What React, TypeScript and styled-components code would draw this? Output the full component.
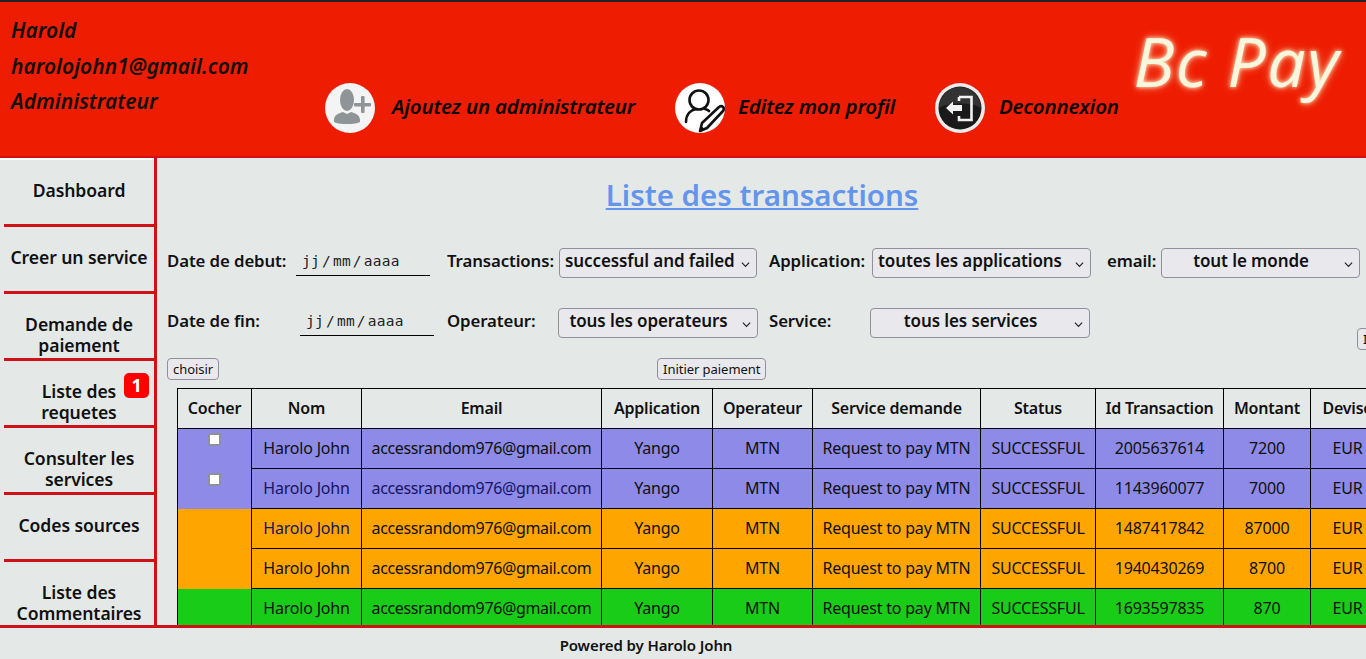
import React from "react"
import styled, { createGlobalStyle } from "styled-components"

const GlobalStyle = createGlobalStyle`
  html, body {
    margin: 0;
    height: 100%;
    overflow: hidden;
  }
  body {
    font-family: "Noto Sans", "Open Sans", sans-serif;
    color: #111;
    background: #e4e9e8;
  }
`

const RED = "#d01218"

const Page = styled.div`
  height: 659px;
  display: grid;
  grid-template-rows: 158px 1fr 34px;
  overflow: hidden;
`

const Header = styled.header`
  display: flex;
  background: #ee1c00;
  border-top: 2px solid #222;
  border-bottom: 2px solid ${RED};
  position: relative;
`

const UserInfo = styled.div`
  width: 325px;
  flex: none;
  padding: 14px 0 0 11px;
  box-sizing: border-box;
  display: flex;
  flex-direction: column;
  gap: 7px;
`

const UserLine = styled.div`
  font-size: 21px;
  line-height: 28.5px;
  font-weight: 600;
  font-style: italic;
  color: #141010;
`

const Actions = styled.nav`
  display: flex;
  align-items: flex-start;
  padding-top: 81px;
`

const Action = styled.a<{ $w: number; $gap: number }>`
  display: flex;
  align-items: center;
  width: ${(p) => p.$w}px;
  gap: ${(p) => p.$gap}px;
  font-size: 20.5px;
  font-weight: 600;
  font-style: italic;
  color: #0c0505;
  letter-spacing: -0.2px;
  white-space: nowrap;
`

const ActionText = styled.span`
  padding-bottom: 4px;
`

const Round = styled.svg`
  width: 50px;
  height: 50px;
  flex: none;
`

const Brand = styled.div`
  position: absolute;
  top: 19px;
  right: 26px;
  font-family: "Open Sans", sans-serif;
  font-style: italic;
  font-size: 68px;
  line-height: 80px;
  color: #f8f6dc;
  letter-spacing: 1.5px;
  text-shadow: 0 0 4px #fff6c8, 0 0 10px rgba(255, 232, 190, 0.6);
`

const Middle = styled.div`
  display: grid;
  grid-template-columns: 157px 1fr;
  min-height: 0;
  overflow: hidden;
`

const Sidebar = styled.aside`
  border-right: 3px solid ${RED};
  overflow: hidden;
`

const NavList = styled.div`
  border-top: 2px solid #fff;
  display: flex;
  flex-direction: column;
`

const NavItem = styled.div`
  position: relative;
  height: 67px;
  flex: none;
  box-sizing: border-box;
  margin-left: 4px;
  padding-top: 20px;
  border-bottom: 3px solid ${RED};
  text-align: center;
  font-size: 17.6px;
  line-height: 21px;
  font-weight: 600;
  letter-spacing: -0.1px;
  color: #111;
`

const NavLast = styled(NavItem)`
  border-bottom: none;
`

const Badge = styled.span`
  position: absolute;
  top: 12px;
  right: 5px;
  width: 25px;
  height: 25px;
  border-radius: 5px;
  background: #f00;
  color: #fff;
  font-size: 18px;
  line-height: 24px;
  font-weight: 700;
  text-align: center;
`

const Main = styled.main`
  min-width: 0;
  overflow: hidden;
  padding: 0 0 0 10px;
  display: flex;
  flex-direction: column;
`

const Title = styled.h1`
  flex: none;
  margin: 17px 0 0 0;
  height: 59px;
  width: 1190px;
  text-align: center;
  font-size: 29.5px;
  line-height: 40px;
  font-weight: 600;
  color: #6495ed;
  text-decoration: underline;
`

const FilterRow = styled.div`
  display: flex;
  flex: none;
  align-items: center;
  height: 30px;
  white-space: nowrap;
`

const FirstRow = styled(FilterRow)`
  margin-top: 14px;
`

const SecondRow = styled(FilterRow)`
  margin-top: 30px;
`

const Label = styled.label<{ $w: number }>`
  width: ${(p) => p.$w}px;
  flex: none;
  font-size: 16.8px;
  font-weight: 600;
  letter-spacing: -0.1px;
  padding-bottom: 6px;
  color: #111;
`

const DateBox = styled.div<{ $mr: number }>`
  width: 134px;
  margin-right: ${(p) => p.$mr}px;
  align-self: flex-start;
  flex: none;
  box-sizing: border-box;
  height: 28px;
  border-bottom: 1px solid #000;
  padding: 3px 0 0 6px;
  font-family: "DejaVu Sans Mono", monospace;
  font-size: 14.5px;
  line-height: 20px;
  letter-spacing: 0.25px;
  word-spacing: -7px;
  color: #222;
`

const Select = styled.div<{ $w: number; $mr: number; $center?: boolean }>`
  width: ${(p) => p.$w}px;
  margin-right: ${(p) => p.$mr}px;
  flex: none;
  box-sizing: border-box;
  height: 30px;
  border: 1px solid #8f8f9d;
  border-radius: 4px;
  background: #e9e9ed;
  position: relative;
  padding: 0 24px 0 5px;
  text-align: ${(p) => (p.$center ? "center" : "left")};
  font-size: 17px;
  line-height: 24px;
  font-weight: 600;
  letter-spacing: -0.1px;
  color: #111;
`

const Chevron = styled.svg`
  position: absolute;
  right: 6px;
  top: 11px;
  width: 9px;
  height: 9px;
`

const ButtonRow = styled.div`
  margin-top: 20px;
  height: 22px;
  display: flex;
  flex: none;
`

const SmallButton = styled.button<{ $mr?: number }>`
  box-sizing: border-box;
  height: 22px;
  margin: 0 ${(p) => p.$mr ?? 0}px 0 0;
  padding: 0 5px;
  flex: none;
  border: 1px solid #8f8f9d;
  border-radius: 4px;
  background: #e9e9ed;
  font-family: "Noto Sans", sans-serif;
  font-size: 13px;
  line-height: 20px;
  letter-spacing: -0.05px;
  color: #111;
`

const StrayButton = styled(SmallButton)`
  align-self: flex-start;
  margin: 20px 0 0 267px;
`

const Table = styled.table`
  margin: 8px 0 0 10px;
  border-collapse: collapse;
  table-layout: fixed;
  width: 1207px;
  flex: none;
  font-size: 16px;
  letter-spacing: -0.2px;
`

const Th = styled.th`
  height: 40px;
  box-sizing: border-box;
  padding: 0 0 2px 0;
  border: 1px solid #000;
  text-align: center;
  font-weight: 600;
  white-space: nowrap;
  color: #111;
`

const Td = styled.td<{ $bg: string; $ink?: boolean }>`
  height: 40px;
  box-sizing: border-box;
  padding: 0 0 2px 0;
  border: 1px solid #000;
  background: ${(p) => p.$bg};
  color: ${(p) => (p.$ink ? "#181460" : "#10100c")};
  text-align: center;
  white-space: nowrap;
`

const MailTd = styled(Td)`
  letter-spacing: -0.36px;
`

const CheckCell = styled.td<{ $bg: string }>`
  height: 40px;
  box-sizing: border-box;
  padding: 2px 0 0 30px;
  border-left: 1px solid #000;
  border-right: 1px solid #000;
  background: ${(p) => p.$bg};
  vertical-align: top;
`

const Check = styled.input`
  width: 13px;
  height: 13px;
  margin: 2px 0 0 0;
  display: block;
  appearance: none;
  background: #fff;
  border: 2px solid #8f8f9d;
  border-radius: 2px;
  box-sizing: border-box;
`

const Footer = styled.footer`
  border-top: 3px solid ${RED};
  box-sizing: border-box;
  text-align: center;
  font-size: 15px;
  line-height: 34px;
  font-weight: 600;
  letter-spacing: -0.1px;
  color: #111;
  padding-right: 74px;
`

const columns = [74, 110, 240, 111, 100, 168, 115, 128, 87, 74]
const headers = ["Cocher", "Nom", "Email", "Application", "Operateur", "Service demande", "Status", "Id Transaction", "Montant", "Devise"]

const PURPLE = "#8d8ae8"
const ORANGE = "#ffa500"
const GREEN = "#18cc18"

const rows = [
  { bg: PURPLE, check: true, id: "2005637614", amount: "7200", ink: false, inkMail: false },
  { bg: PURPLE, check: true, id: "1143960077", amount: "7000", ink: true, inkMail: true },
  { bg: ORANGE, check: false, id: "1487417842", amount: "87000", ink: true, inkMail: false },
  { bg: ORANGE, check: false, id: "1940430269", amount: "8700", ink: false, inkMail: false },
  { bg: GREEN, check: false, id: "1693597835", amount: "870", ink: false, inkMail: false },
]

const AddAdminIcon = () => (
  <Round viewBox="0 0 50 50">
    <circle cx="25" cy="25" r="25" fill="#f4f4f4" />
    <ellipse cx="22" cy="17" rx="7" ry="11" fill="#8f9498" />
    <path d="M9 37c0-5 5-7 9-8l4 2 4-2c4 1 9 3 9 8v2c-4 2-9 2-13 2s-9 0-13-2z" fill="#8f9498" />
    <rect x="36" y="13" width="3.6" height="17" rx="1" fill="#8f9498" />
    <rect x="29" y="20" width="17" height="3.6" rx="1" fill="#8f9498" />
  </Round>
)

const EditProfileIcon = () => (
  <Round viewBox="0 0 50 50">
    <circle cx="25" cy="25" r="25" fill="#fff" />
    <circle cx="24" cy="17" r="9.5" fill="none" stroke="#111" strokeWidth="2.6" />
    <path d="M11 39c0-8 5-12 10-13M30 26c2 .5 3 1 4 2" fill="none" stroke="#111" strokeWidth="2.6" strokeLinecap="round" />
    <path d="M25 48l2-8 17-16c1.500-1 3-1 4 0s1 2.500 0 4L32 45z" fill="#fff" stroke="#111" strokeWidth="2.6" strokeLinejoin="round" />
    <path d="M25 48l1.500-5 3 3z" fill="#111" />
  </Round>
)

const LogoutIcon = () => (
  <Round viewBox="0 0 50 50">
    <circle cx="25" cy="25" r="25" fill="#ececec" />
    <circle cx="25" cy="25" r="21.500" fill="#1a1a1a" />
    <path d="M4 25a21 21 0 0 1 42 0c-8-6-34-6-42 0z" fill="#333" />
    <path d="M24 14h12.500v23H24v-4M24 18v-4" fill="none" stroke="#f2f2f2" strokeWidth="2.6" />
    <path d="M11 25l7-6.500V22h9v6h-9v3.500z" fill="#f2f2f2" />
  </Round>
)

const Caret = () => (
  <Chevron viewBox="0 0 10 10">
    <path d="M1 3l4 4 4-4" fill="none" stroke="#222" strokeWidth="1.300" />
  </Chevron>
)

const App: React.FC = () => {
  return (
    <Page>
      <GlobalStyle />
      <Header>
        <UserInfo>
          <UserLine>Harold</UserLine>
          <UserLine>harolojohn1@gmail.com</UserLine>
          <UserLine>Administrateur</UserLine>
        </UserInfo>
        <Actions>
          <Action $w={350} $gap={17}>
            <AddAdminIcon />
            <ActionText>Ajoutez un administrateur</ActionText>
          </Action>
          <Action $w={260} $gap={13}>
            <EditProfileIcon />
            <ActionText>Editez mon profil</ActionText>
          </Action>
          <Action $w={200} $gap={14}>
            <LogoutIcon />
            <ActionText>Deconnexion</ActionText>
          </Action>
        </Actions>
        <Brand>Bc Pay</Brand>
      </Header>

      <Middle>
        <Sidebar>
          <NavList>
            <NavItem>Dashboard</NavItem>
            <NavItem>Creer un service</NavItem>
            <NavItem>
              Demande de
              <br />
              paiement
            </NavItem>
            <NavItem>
              Liste des
              <br />
              requetes
              <Badge>1</Badge>
            </NavItem>
            <NavItem>
              Consulter les
              <br />
              services
            </NavItem>
            <NavItem>Codes sources</NavItem>
            <NavLast>
              Liste des
              <br />
              Commentaires
            </NavLast>
          </NavList>
        </Sidebar>

        <Main>
          <Title>Liste des transactions</Title>
          <FirstRow>
            <Label $w={129}>Date de debut:</Label>
            <DateBox $mr={17}>jj / mm / aaaa</DateBox>
            <Label $w={112}>Transactions:</Label>
            <Select $w={198} $mr={12}>
              successful and failed
              <Caret />
            </Select>
            <Label $w={103}>Application:</Label>
            <Select $w={219} $mr={16}>
              toutes les applications
              <Caret />
            </Select>
            <Label $w={54}>email:</Label>
            <Select $w={199} $mr={0} $center>
              tout le monde
              <Caret />
            </Select>
          </FirstRow>
          <SecondRow>
            <Label $w={133}>Date de fin:</Label>
            <DateBox $mr={13}>jj / mm / aaaa</DateBox>
            <Label $w={111}>Operateur:</Label>
            <Select $w={200} $mr={11} $center>
              tous les operateurs
              <Caret />
            </Select>
            <Label $w={101}>Service:</Label>
            <Select $w={220} $mr={0} $center>
              tous les services
              <Caret />
            </Select>
            <StrayButton>Initier</StrayButton>
          </SecondRow>
          <ButtonRow>
            <SmallButton $mr={438}>choisir</SmallButton>
            <SmallButton>Initier paiement</SmallButton>
          </ButtonRow>
          <Table>
            <colgroup>
              {columns.map((w, i) => (
                <col key={i} style={{ width: w }} />
              ))}
            </colgroup>
            <thead>
              <tr>
                {headers.map((h) => (
                  <Th key={h}>{h}</Th>
                ))}
              </tr>
            </thead>
            <tbody>
              {rows.map((r) => (
                <tr key={r.id}>
                  <CheckCell $bg={r.bg}>{r.check && <Check type="checkbox" />}</CheckCell>
                  <Td $bg={r.bg} $ink={r.ink}>Harolo John</Td>
                  <MailTd $bg={r.bg} $ink={r.inkMail}>accessrandom976@gmail.com</MailTd>
                  <Td $bg={r.bg}>Yango</Td>
                  <Td $bg={r.bg}>MTN</Td>
                  <Td $bg={r.bg}>Request to pay MTN</Td>
                  <Td $bg={r.bg}>SUCCESSFUL</Td>
                  <Td $bg={r.bg}>{r.id}</Td>
                  <Td $bg={r.bg}>{r.amount}</Td>
                  <Td $bg={r.bg}>EUR</Td>
                </tr>
              ))}
            </tbody>
          </Table>
        </Main>
      </Middle>

      <Footer>Powered by Harolo John</Footer>
    </Page>
  )
}

export default App
